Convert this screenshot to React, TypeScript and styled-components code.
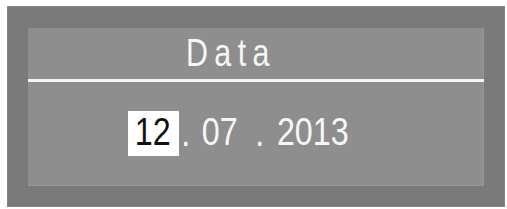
import React from 'react';
import styled, { createGlobalStyle } from 'styled-components';

const GlobalStyle = createGlobalStyle`
  html, body {
    margin: 0;
    padding: 0;
    background: #ffffff;
  }
  body {
    font-family: "Liberation Sans", Arial, sans-serif;
  }
`;

const Page = styled.div`
  width: 507px;
  height: 209px;
  padding: 6px 2px 2px 7px;
  box-sizing: border-box;
`;

const Frame = styled.div`
  width: 498px;
  height: 201px;
  box-sizing: border-box;
  background: #7a7a7a;
  border: 1px solid #858585;
  padding: 21px 20px 20px 20px;
`;

const Panel = styled.div`
  height: 100%;
  background: #8e8e8e;
  display: flex;
  flex-direction: column;
  box-shadow: inset -1px -1px 0 #979797;
`;

const Header = styled.div`
  height: 51px;
  padding-left: 158px;
  display: flex;
  align-items: center;
`;

// the panel font is a narrow pixel face, so the wide sans is squeezed
const Title = styled.span`
  display: inline-block;
  font-size: 38px;
  line-height: 51px;
  letter-spacing: 8px;
  color: #f7f7f7;
  transform: scaleX(0.8);
  transform-origin: left center;
`;

const Rule = styled.div`
  height: 3px;
  background: #f4f4f4;
`;

const Body = styled.div`
  flex: 1;
  display: flex;
  align-items: center;
  padding-left: 100px;
  padding-bottom: 1px;
`;

const DateRow = styled.div`
  display: flex;
  align-items: center;
  font-size: 38px;
  color: #f7f7f7;
  transform: scaleX(0.85);
  transform-origin: left center;
`;

const Field = styled.span<{ $selected?: boolean }>`
  display: inline-block;
  height: 45px;
  padding: ${p => (p.$selected ? '0 10px 0 8px' : '0')};
  background: ${p => (p.$selected ? '#ffffff' : 'transparent')};
  color: ${p => (p.$selected ? '#111111' : '#f7f7f7')};
  line-height: 43px;
`;

const Sep = styled.span<{ $before: number; $after: number }>`
  display: inline-block;
  margin-left: ${p => p.$before}px;
  margin-right: ${p => p.$after}px;
  line-height: 43px;
`;

export default function App() {
  return (
    <>
      <GlobalStyle />
      <Page>
        <Frame>
          <Panel>
            <Header>
              <Title>Data</Title>
            </Header>
            <Rule />
            <Body>
              <DateRow>
                <Field $selected>12</Field>
                <Sep $before={2.5} $after={13.5}>.</Sep>
                <Field>07</Field>
                <Sep $before={20.5} $after={15}>.</Sep>
                <Field>2013</Field>
              </DateRow>
            </Body>
          </Panel>
        </Frame>
      </Page>
    </>
  );
}
